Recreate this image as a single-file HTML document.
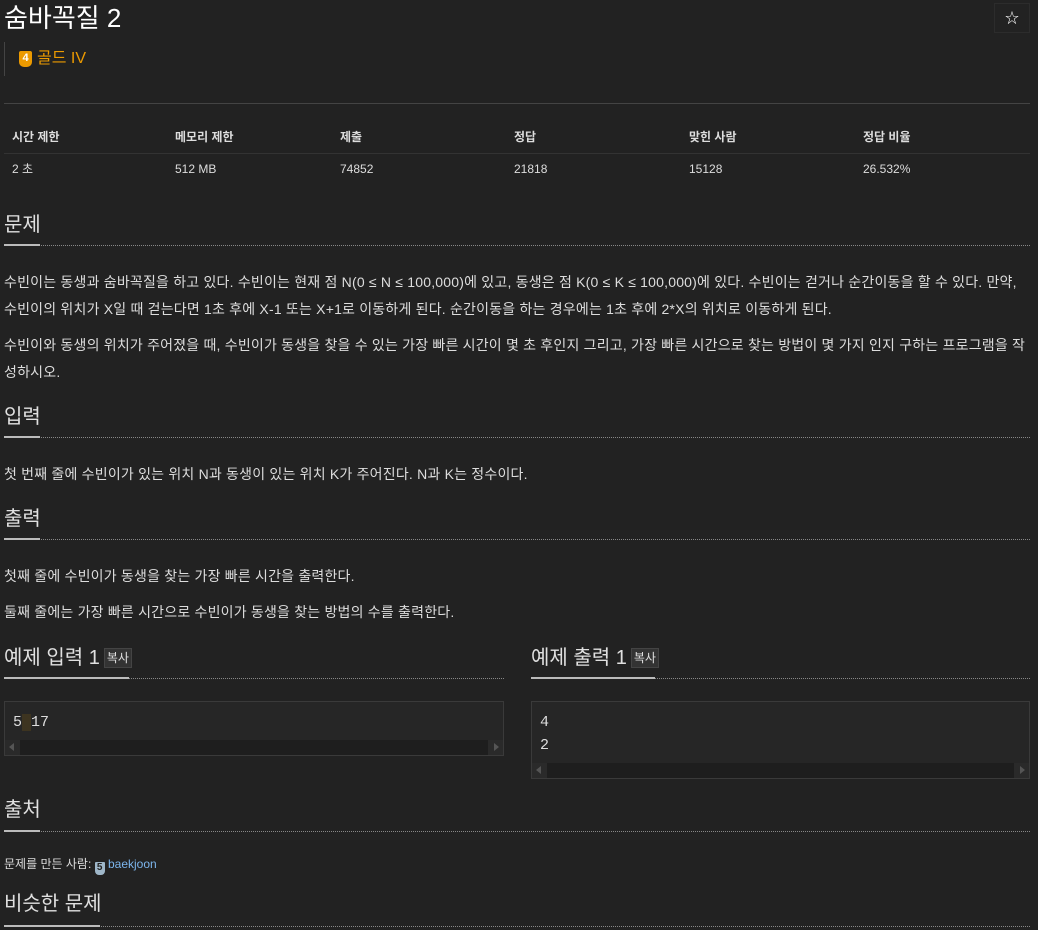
<!DOCTYPE html>
<html><head><meta charset="utf-8"><style>
*{margin:0;padding:0;box-sizing:border-box}
body{width:1038px;height:930px;background:#222;color:#ddd;font-family:"Liberation Sans","Noto Sans CJK KR",sans-serif;position:relative;overflow:hidden}
.a{position:absolute;white-space:nowrap}
.p{font-size:14px;line-height:20px;letter-spacing:0.2px}
.h{font-size:20px;line-height:26px;color:#e0e0e0}
.dl{position:absolute;height:0;border-top:1px dotted #888}
.sl{position:absolute;height:0;border-top:2px solid #bbb}
.th{font-size:12px;font-weight:bold;line-height:16px;color:#ddd}
.td{font-size:12px;line-height:16px;color:#ddd}
.cp{display:inline-block;font-size:12px;line-height:16px;padding:1px 2px;background:#333;border:1px solid #444;vertical-align:2px;margin-left:4px}
.box{position:absolute;border:1px solid #3a3a3a;background:#262626}
.sb{position:absolute;left:0;right:0;bottom:0;height:15px;background:#1e1e1e}
.sb .l,.sb .r{position:absolute;top:0;width:15px;height:15px;background:#2a2a2a}
.sb .l{left:0}.sb .r{right:0}
.sb .l:after{content:"";position:absolute;left:4px;top:3px;border-right:5px solid #555;border-top:4px solid transparent;border-bottom:4px solid transparent}
.sb .r:after{content:"";position:absolute;left:6px;top:3px;border-left:5px solid #555;border-top:4px solid transparent;border-bottom:4px solid transparent}
.mono{font-family:"Liberation Mono",monospace;font-size:15px;line-height:23px;position:absolute;left:8px;top:9px}
</style></head><body>
<div class="a" style="left:4px;top:1px;font-size:26px;line-height:34px;color:#fff">숨바꼭질 2</div>
<div class="a" style="left:994px;top:3px;width:36px;height:30px;border:1px solid #2c2c2c;text-align:center;line-height:28px;font-size:14px;color:#fff">☆</div>
<div class="a" style="left:4px;top:42px;width:1px;height:34px;background:#444"></div>
<div class="a" style="left:19px;top:51px;width:13px;height:16px;background:#ec9a00;border-radius:2px 2px 5px 5px;color:#fff;font-size:11px;font-weight:bold;text-align:center;line-height:15px">4</div>
<div class="a" style="left:37px;top:49px;font-size:16px;line-height:20px;color:#ec9a00">골드 IV</div>
<div class="a" style="left:4px;top:103px;width:1026px;height:1px;background:#444"></div>
<div class="a th" style="left:12px;top:129px">시간 제한</div>
<div class="a th" style="left:175px;top:129px">메모리 제한</div>
<div class="a th" style="left:340px;top:129px">제출</div>
<div class="a th" style="left:514px;top:129px">정답</div>
<div class="a th" style="left:689px;top:129px">맞힌 사람</div>
<div class="a th" style="left:863px;top:129px">정답 비율</div>
<div class="a" style="left:4px;top:153px;width:1026px;height:1px;background:#333"></div>
<div class="a td" style="left:12px;top:161px">2 초</div>
<div class="a td" style="left:175px;top:161px">512 MB</div>
<div class="a td" style="left:340px;top:161px">74852</div>
<div class="a td" style="left:514px;top:161px">21818</div>
<div class="a td" style="left:689px;top:161px">15128</div>
<div class="a td" style="left:863px;top:161px">26.532%</div>

<div class="a h" style="left:4px;top:212px">문제</div>
<div class="dl" style="left:4px;width:1026px;top:245px"></div><div class="sl" style="left:4px;width:36px;top:244px"></div>
<div class="a p" style="left:4px;top:272px">수빈이는 동생과 숨바꼭질을 하고 있다. 수빈이는 현재 점 N(0 ≤ N ≤ 100,000)에 있고, 동생은 점 K(0 ≤ K ≤ 100,000)에 있다. 수빈이는 걷거나 순간이동을 할 수 있다. 만약,</div>
<div class="a p" style="left:4px;top:299px">수빈이의 위치가 X일 때 걷는다면 1초 후에 X-1 또는 X+1로 이동하게 된다. 순간이동을 하는 경우에는 1초 후에 2*X의 위치로 이동하게 된다.</div>
<div class="a p" style="left:4px;top:335px">수빈이와 동생의 위치가 주어졌을 때, 수빈이가 동생을 찾을 수 있는 가장 빠른 시간이 몇 초 후인지 그리고, 가장 빠른 시간으로 찾는 방법이 몇 가지 인지 구하는 프로그램을 작</div>
<div class="a p" style="left:4px;top:362px">성하시오.</div>

<div class="a h" style="left:4px;top:404px">입력</div>
<div class="dl" style="left:4px;width:1026px;top:437px"></div><div class="sl" style="left:4px;width:36px;top:436px"></div>
<div class="a p" style="left:4px;top:464px">첫 번째 줄에 수빈이가 있는 위치 N과 동생이 있는 위치 K가 주어진다. N과 K는 정수이다.</div>

<div class="a h" style="left:4px;top:506px">출력</div>
<div class="dl" style="left:4px;width:1026px;top:539px"></div><div class="sl" style="left:4px;width:36px;top:538px"></div>
<div class="a p" style="left:4px;top:566px">첫째 줄에 수빈이가 동생을 찾는 가장 빠른 시간을 출력한다.</div>
<div class="a p" style="left:4px;top:602px">둘째 줄에는 가장 빠른 시간으로 수빈이가 동생을 찾는 방법의 수를 출력한다.</div>

<div class="a h" style="left:4px;top:645px">예제 입력 1<span class="cp">복사</span></div>
<div class="dl" style="left:4px;width:500px;top:678px"></div><div class="sl" style="left:4px;width:125px;top:677px"></div>
<div class="box" style="left:4px;top:701px;width:500px;height:55px"><div class="mono">5<span style="background:#3d3420">&nbsp;</span>17</div><div class="sb"><div class="l"></div><div class="r"></div></div></div>

<div class="a h" style="left:531px;top:645px">예제 출력 1<span class="cp">복사</span></div>
<div class="dl" style="left:531px;width:499px;top:678px"></div><div class="sl" style="left:531px;width:124px;top:677px"></div>
<div class="box" style="left:531px;top:701px;width:499px;height:78px"><div class="mono">4<br>2</div><div class="sb"><div class="l"></div><div class="r"></div></div></div>

<div class="a h" style="left:4px;top:797px">출처</div>
<div class="dl" style="left:4px;width:1026px;top:831px"></div><div class="sl" style="left:4px;width:36px;top:830px"></div>
<div class="a" style="left:4px;top:856px;font-size:12px;line-height:16px">문제를 만든 사람: <span style="display:inline-block;width:10px;height:13px;background:#9fb7c9;border-radius:1px 1px 4px 4px;color:#222;font-size:10px;font-weight:bold;text-align:center;line-height:12px;vertical-align:-2px">5</span> <span style="color:#7cb5ec">baekjoon</span></div>

<div class="a h" style="left:4px;top:891px">비슷한 문제</div>
<div class="dl" style="left:4px;width:1026px;top:926px"></div><div class="sl" style="left:4px;width:96px;top:925px"></div>
</body></html>
